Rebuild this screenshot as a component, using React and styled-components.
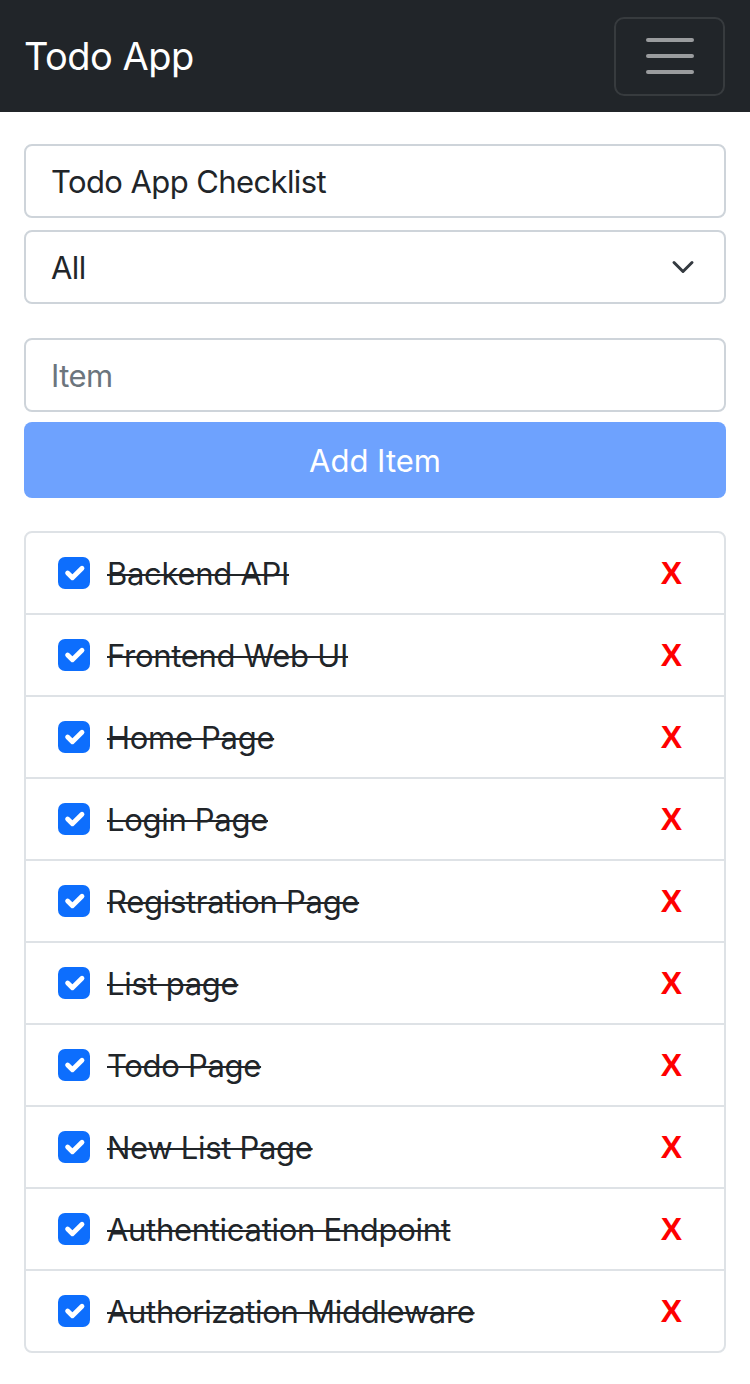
import { createGlobalStyle, styled } from "styled-components";

const GlobalStyle = createGlobalStyle`
  * { box-sizing: border-box; }
  body {
    margin: 0;
    background: #fff;
    font-family: Inter, "Liberation Sans", sans-serif;
    color: #212529;
  }
`;

const Navbar = styled.nav`
  height: 112px;
  background: #212529;
  display: flex;
  align-items: center;
  justify-content: space-between;
  padding: 0 25px 0 24px;
`;

const Brand = styled.span`
  color: #fff;
  font-size: 38px;
  letter-spacing: -0.5px;
`;

const Toggler = styled.button`
  width: 111px;
  height: 79px;
  border: 2px solid rgba(255, 255, 255, 0.1);
  border-radius: 10px;
  background: transparent;
  display: flex;
  flex-direction: column;
  align-items: center;
  justify-content: center;
  gap: 12px;
  padding: 0;
`;

const Bar = styled.span`
  width: 48px;
  height: 4px;
  border-radius: 2px;
  background: rgba(255, 255, 255, 0.55);
`;

const Main = styled.main`
  padding: 32px 24px;
  display: flex;
  flex-direction: column;
`;

const Field = styled.div`
  height: 74px;
  border: 2px solid #ced4da;
  border-radius: 8px;
  display: flex;
  align-items: center;
  justify-content: space-between;
  padding: 0 29px 0 25px;
  font-size: 31px;
  letter-spacing: -0.6px;
  color: ${p => (p.placeholder ? "#6c757d" : "#212529")};
  margin-bottom: ${p => p.mb || 0}px;
`;

const AddButton = styled.button`
  height: 76px;
  border: none;
  border-radius: 8px;
  background: #6ea2fe;
  color: #fff;
  font-family: inherit;
  font-size: 31px;
  margin-bottom: 33px;
`;

const List = styled.ul`
  list-style: none;
  margin: 0;
  padding: 0;
  border: 2px solid #dee2e6;
  border-radius: 8px;
`;

const Row = styled.li`
  height: 80px;
  display: flex;
  align-items: center;
  padding: 0 42px 0 32px;
  & + & {
    height: 82px;
    border-top: 2px solid #dee2e6;
  }
`;

const Check = styled.span`
  width: 32px;
  height: 32px;
  border-radius: 7px;
  background: #0d6efd;
  display: flex;
  align-items: center;
  justify-content: center;
  margin-right: 17px;
  flex-shrink: 0;
`;

const Label = styled.span`
  flex: 1;
  font-size: 31px;
  text-decoration: line-through;
  text-decoration-thickness: 2px;
  letter-spacing: -0.3px;
`;

const Remove = styled.span`
  color: #ff0000;
  font-family: "Liberation Sans", Arial, sans-serif;
  font-weight: bold;
  font-size: 32px;
`;

const items = [
  "Backend API",
  "Frontend Web UI",
  "Home Page",
  "Login Page",
  "Registration Page",
  "List page",
  "Todo Page",
  "New List Page",
  "Authentication Endpoint",
  "Authorization Middleware",
];

export default function App() {
  return (
    <>
      <GlobalStyle />
      <Navbar>
        <Brand>Todo App</Brand>
        <Toggler>
          <Bar />
          <Bar />
          <Bar />
        </Toggler>
      </Navbar>
      <Main>
        <Field mb={12}>Todo App Checklist</Field>
        <Field mb={34}>
          All
          <svg width="24" height="24" viewBox="0 0 16 16" fill="none">
            <path d="M2 5l6 6 6-6" stroke="#343a40" strokeWidth="2" strokeLinecap="round" strokeLinejoin="round" />
          </svg>
        </Field>
        <Field placeholder="1" mb={10}>Item</Field>
        <AddButton>Add Item</AddButton>
        <List>
          {items.map(item => (
            <Row key={item}>
              <Check>
                <svg width="32" height="32" viewBox="0 0 20 20" fill="none">
                  <path d="M6 10l3 3 6-6" stroke="#fff" strokeWidth="3" strokeLinecap="round" strokeLinejoin="round" />
                </svg>
              </Check>
              <Label>{item}</Label>
              <Remove>X</Remove>
            </Row>
          ))}
        </List>
      </Main>
    </>
  );
}
